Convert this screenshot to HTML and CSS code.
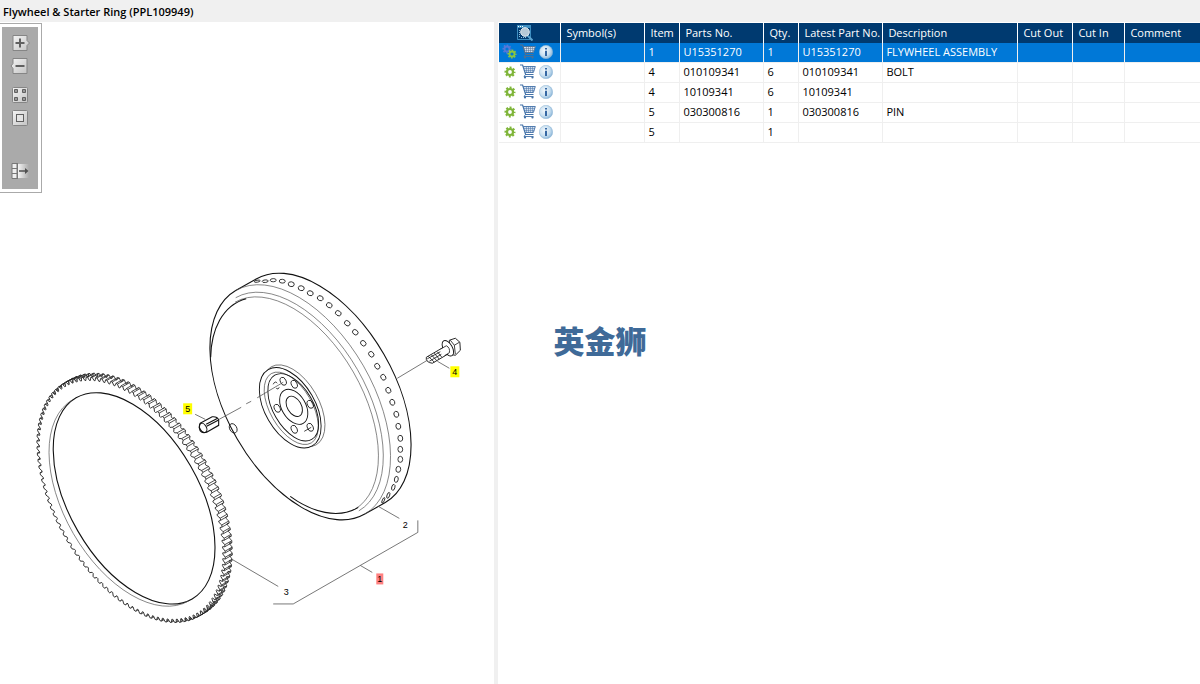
FILE: index.html
```
<!DOCTYPE html>
<html lang="en">
<head>
    <meta charset="UTF-8">
    <meta name="viewport" content="width=device-width, initial-scale=1.0">
    <title>Flywheel &amp; Starter Ring</title>
    <link rel="stylesheet" href="styles.css">
</head>
<body>

    <!-- Shared icons -->
    <svg class="icon-defs" aria-hidden="true">
        <defs>
            <linearGradient id="btn-fill" x1="0" y1="0" x2="1" y2="1">
                <stop offset="0" stop-color="#f4f4f4"/>
                <stop offset="1" stop-color="#c4c4c4"/>
            </linearGradient>
            <linearGradient id="fade-fill" x1="0" y1="0" x2="1" y2="0">
                <stop offset="0" stop-color="#f4f4f4"/>
                <stop offset="1" stop-color="#aaaaaa"/>
            </linearGradient>
            <radialGradient id="info-fill" cx="0.4" cy="0.4" r="0.65">
                <stop offset="0" stop-color="#f2f8fc"/>
                <stop offset="0.6" stop-color="#c8dff0"/>
                <stop offset="1" stop-color="#85b2d6"/>
            </radialGradient>
        </defs>
        <symbol id="gear" viewBox="0 0 12 12">
            <g fill="none" stroke="currentColor">
                <circle cx="6" cy="6" r="3" stroke-width="2.2"/>
                <circle cx="6" cy="6" r="4.6" stroke-width="1.8" stroke-dasharray="2 1.613" stroke-dashoffset="1"/>
            </g>
        </symbol>
        <symbol id="cart" viewBox="0 0 16 15">
            <path d="M3.500 2.500h12l-2 6H5.200z" fill="#d5e0ee"/>
            <path d="M0 1h2.600l3 9.500h7.900" fill="none" stroke="currentColor" stroke-width="1.200"/>
            <path d="M3.300 2.500h12L13.400 8.500H5.200" fill="none" stroke="currentColor" stroke-width="0.900"/>
            <path d="M3.800 4.500h11M4.400 6.500h9.800M6.500 2.500v6M8.500 2.500v6M10.500 2.500v6M12.500 2.500v6" fill="none" stroke="currentColor" stroke-width="0.500"/>
            <path d="M5.500 10.500L4 12.500h9.500" fill="none" stroke="currentColor" stroke-width="0.900"/>
            <circle cx="5" cy="13.500" r="1.100" fill="currentColor"/>
            <circle cx="12.500" cy="13.500" r="1.100" fill="currentColor"/>
        </symbol>
        <symbol id="info" viewBox="0 0 14 14">
            <circle cx="7" cy="7" r="6.700" fill="url(#info-fill)" stroke="#8fb6d6" stroke-width="0.500"/>
            <path d="M6 3h2v1.600H6zM6 5.700h2v5.300H6z" fill="#3567a3"/>
        </symbol>
    </svg>

    <h1 class="title">Flywheel &amp; Starter Ring (PPL109949)</h1>

    <main class="panes">
        <!-- Drawing -->
        <section class="drawing">
            <svg class="diagram" viewBox="0 22 494 662" role="img" aria-label="Flywheel drawing">
                <!-- Ring gear -->
                <g id="ring"></g>
                <g class="ink">
                    <ellipse cx="134" cy="498" rx="116" ry="65" transform="rotate(60 134 498)"/>
                    <path class="thin" d="M72.500 399.500A100 57 60 0 0 188.500 600.500"/>
                </g>

                <!-- Flywheel -->
                <g class="ink">
                    <path d="M235.500 290.300L256 278.800A100 56.500 60 0 1 385 502.200L364.500 513.700A100 56.500 60 0 1 235.500 290.300z" fill="#fff"/>
                    <path class="thin" d="M235.500 290.300A100 56.500 60 0 1 364.500 513.700"/>
                    <path class="thin" d="M235.500 297.500A100 56.500 60 0 1 358.500 510.500"/>
                    <path class="thin" d="M234.800 302A100 56.500 60 0 1 354.300 509"/>
                    <path d="M246 298.500C222 305 211 330 210.500 357M290 496C312 512 338 519 358 507"/>
                </g>
                <g id="rim-holes" class="ink small"></g>

                <!-- Hub -->
                <g class="ink">
                    <ellipse class="thin" cx="293.500" cy="405.500" rx="45" ry="25" transform="rotate(60 293.500 405.500)" fill="#fff"/>
                    <ellipse class="mid" cx="290" cy="407.500" rx="44" ry="25" transform="rotate(60 290 407.500)" fill="#fff"/>
                    <ellipse class="thin" cx="291" cy="408" rx="40" ry="21" transform="rotate(60 291 408)"/>
                    <ellipse class="mid" cx="293" cy="407" rx="37" ry="20" transform="rotate(60 293 407)"/>
                    <ellipse class="mid" cx="293.500" cy="406.500" rx="19" ry="12" transform="rotate(60 293.500 406.500)"/>
                    <ellipse class="mid" cx="294" cy="406" rx="11" ry="7" transform="rotate(60 294 406)"/>
                </g>
                <g id="hub-holes" class="ink small"></g>
                <g class="ink small">
                    <path d="M273 384q2-4 4-1M276 388q2 2 3-1M304 431l7-4"/>
                    <ellipse cx="233" cy="428" rx="5" ry="3.500" transform="rotate(60 233 428)"/>
                </g>

                <!-- Pin -->
                <g class="ink">
                    <path d="M200 423L212 416.500Q217 416 218.500 419.500L218.500 425L206.500 432Q200 434 199 427z" fill="#fff"/>
                    <ellipse cx="203" cy="427.500" rx="5" ry="3.200" transform="rotate(60 203 427.500)"/>
                    <path d="M206 424L217.500 418M206.500 426L218 420"/>
                </g>

                <!-- Bolt -->
                <g class="ink">
                    <path class="mid" d="M426 357L444 346.500L449 353L432 363Q425 362 426 357z" fill="#fff"/>
                    <path class="small" d="M428 356l6 6M431 354.500l5.500 6M434 353l5 6M437 351.500l4.500 5.500M427 358.500l13-7M429 361l12-7"/>
                    <path class="mid" d="M449 340L455 338L459.500 342L460 350L455 355L449 354z" fill="#fff"/>
                    <ellipse class="mid" cx="447.500" cy="348" rx="8.500" ry="4.500" transform="rotate(60 447.500 348)" fill="#fff"/>
                    <path class="small" d="M450 340l4 5 5-3M454 345l1 9"/>
                    <path class="small" d="M440 349l6-3.500q4 2 3 7l-5 3" fill="#fff"/>
                </g>

                <!-- Leader lines -->
                <path class="leader" d="M397 378L427 360M437 361L449 368M195 414L205 419M219 419L241 407M246 403.500L251 401M257 397.500L283 382M378 506L399 518M232 559L278 586M360 565L372 572M417.500 520V532L293 603.500H273"/>

                <!-- Callouts -->
                <g class="callouts">
                    <rect class="mark" x="450" y="366" width="9" height="11"/>
                    <rect class="mark" x="183" y="403" width="9" height="11"/>
                    <rect class="mark-active" x="376" y="573" width="7" height="11"/>
                    <text x="454.500" y="375">4</text>
                    <text x="187.500" y="412">5</text>
                    <text x="379.500" y="582">1</text>
                    <text x="405" y="528">2</text>
                    <text x="286" y="595">3</text>
                </g>
            </svg>

            <div class="toolbar">
                <button type="button" aria-label="Zoom in">
                    <svg viewBox="0 0 18 16">
                        <path d="M1 .5h14v5l2.500 2.500-2.500 2.500v5H1z" fill="url(#btn-fill)" stroke="#858585"/>
                        <path d="M8 3.500v9M3.500 8h9" stroke="#606060" stroke-width="2"/>
                    </svg>
                </button>
                <button type="button" aria-label="Zoom out">
                    <svg viewBox="0 0 18 16">
                        <path d="M1 .5h14v15H1v-5L-1 8l2-2.500z" fill="url(#btn-fill)" stroke="#858585"/>
                        <path d="M3.500 8h9" stroke="#606060" stroke-width="2"/>
                    </svg>
                </button>
                <button type="button" class="spaced" aria-label="Fit page">
                    <svg viewBox="0 0 18 16">
                        <rect x="0.500" y="0.500" width="15" height="15" rx="1" fill="url(#btn-fill)" stroke="#858585"/>
                        <path d="M2.500 2.500h3v3h-3zM10.500 2.500h3v3h-3zM2.500 10.500h3v3h-3zM10.500 10.500h3v3h-3z" fill="#999" stroke="#606060"/>
                    </svg>
                </button>
                <button type="button" aria-label="Actual size">
                    <svg viewBox="0 0 18 16">
                        <rect x="0.500" y="0.500" width="15" height="15" rx="1" fill="url(#btn-fill)" stroke="#858585"/>
                        <rect x="4.500" y="4.500" width="7" height="7" fill="#e4e4e4" stroke="#606060"/>
                    </svg>
                </button>
                <button type="button" class="last" aria-label="Toggle parts list">
                    <svg viewBox="0 0 18 16">
                        <path d="M0 .5h5v15H0z" fill="#eee" stroke="#777"/>
                        <path d="M0 5.500h5M0 10.500h5" stroke="#777"/>
                        <path d="M6 1h11v14H6z" fill="url(#fade-fill)"/>
                        <path d="M5.500 0v16" stroke="#777"/>
                        <path d="M7 7.300h6V5l3.500 3-3.500 3V8.700H7z" fill="#505050"/>
                    </svg>
                </button>
            </div>
        </section>

        <div class="splitter"></div>

        <!-- Parts list -->
        <section class="parts">
            <table>
                <colgroup>
                    <col class="c-icons"><col class="c-number"><col class="c-short"><col class="c-number"><col class="c-short">
                    <col class="c-number"><col class="c-desc"><col class="c-out"><col class="c-in"><col>
                </colgroup>
                <thead>
                    <tr>
                        <th>
                            <svg class="find" viewBox="0 0 16 16" role="img" aria-label="Find">
                                <path d="M0 0h14v3H0z" fill="#3d8dc0"/>
                                <path d="M.5 3v11.500h13V3" fill="none" stroke="#3d8dc0"/>
                                <path d="M2.500 5v8M4 12.500h6" fill="none" stroke="#8fc0de" stroke-dasharray="1 1"/>
                                <path d="M1 1.500h1M3 1.500h1M5 1.500h1" stroke="#fff"/>
                                <path d="M10.500 10.500l5 5" stroke="#5ba3cf" stroke-width="2"/>
                                <circle cx="8" cy="7" r="4.300" fill="#b5c8d6" stroke="#e4ecf2"/>
                            </svg>
                        </th>
                        <th>Symbol(s)</th>
                        <th>Item</th>
                        <th>Parts No.</th>
                        <th>Qty.</th>
                        <th>Latest Part No.</th>
                        <th>Description</th>
                        <th>Cut Out</th>
                        <th>Cut In</th>
                        <th>Comment</th>
                    </tr>
                </thead>
                <tbody id="parts-body"></tbody>
            </table>
        </section>
    </main>

    <div class="watermark" lang="zh">英金狮</div>

    <script src="script.js"></script>
</body>
</html>
```
FILE: styles.css
```
* {
    box-sizing: border-box;
}
body {
    margin: 0;
    min-height: 100vh;
    display: flex;
    flex-direction: column;
    font-family: "Open Sans", "Noto Sans", sans-serif;
    font-size: 11px;
    color: #000;
    background-color: #f0f0f0;
}
button {
    display: block;
    padding: 0;
    border: none;
    background: none;
    cursor: pointer;
}
svg {
    display: block;
}
.icon-defs {
    position: absolute;
    width: 0;
    height: 0;
}
.title {
    margin: 0;
    padding: 2px 3px 0;
    height: 22px;
    font-size: 11px;
    line-height: 20px;
    font-weight: 600;
}
.panes {
    flex: 1;
    display: grid;
    grid-template-columns: 41.2% 4px 1fr;
}

/* Drawing */
.drawing {
    position: relative;
    background-color: #fff;
}
.diagram {
    width: 100%;
    height: auto;
}
.ink {
    fill: none;
    stroke: #111;
    stroke-width: 1.1;
}
.thin {
    stroke: #555;
    stroke-width: 0.7;
}
.mid {
    stroke-width: 0.9;
}
.small {
    stroke-width: 0.8;
}
.tooth-back {
    fill: #fff;
    stroke: #222;
    stroke-width: 0.8;
}
.tooth-front {
    fill: #fff;
    stroke: #222;
    stroke-width: 0.9;
}
.leader {
    fill: none;
    stroke: #555;
    stroke-width: 0.8;
}
.callouts text {
    font-family: "Liberation Sans", Arial, sans-serif;
    font-size: 9px;
    text-anchor: middle;
}
.mark {
    fill: #ff0;
}
.mark-active {
    fill: #ff8080;
}
.toolbar {
    position: absolute;
    top: 1px;
    left: 0;
    width: 42px;
    height: 170px;
    padding: 11px 0 0 12px;
    display: flex;
    flex-direction: column;
    gap: 7px;
    border: 1px solid #aaa;
    border-left: none;
    background-color: #aaa;
    box-shadow: inset 2px 0 #fff, inset -3px 0 #fff, inset 0 3px #fff, inset 0 -3px #fff;
}
.toolbar svg {
    width: 18px;
    height: 16px;
    overflow: visible;
}
.toolbar .spaced {
    margin-top: 6px;
}
.toolbar .last {
    margin-top: 30px;
}

/* Parts list */
.parts {
    padding-left: 1px;
    background-color: #fff;
    overflow: hidden;
}
table {
    width: 100%;
    margin-top: 1px;
    table-layout: fixed;
    border-collapse: separate;
    border-spacing: 0;
}
.c-icons {
    width: 62px;
}
.c-number {
    width: 84px;
}
.c-short {
    width: 35px;
}
.c-desc {
    width: 135px;
}
.c-out {
    width: 55px;
}
.c-in {
    width: 52px;
}
th, td {
    height: 20px;
    padding: 0 0 0 5px;
    line-height: 18px;
    text-align: left;
    white-space: nowrap;
    border-right: 1px solid #efefef;
}
th {
    font-weight: 400;
    color: #fff;
    background-color: #003a70;
    border-right-color: #fff;
}
td {
    padding: 0 0 2px 3px;
    line-height: 17px;
    border-bottom: 1px solid #efefef;
}
th:last-child, td:last-child {
    border-right: none;
}
.selected td {
    color: #fff;
    background-color: #0078d7;
}
.find {
    width: 16px;
    height: 16px;
    margin-left: 13px;
}
.icons {
    display: flex;
    align-items: center;
    gap: 3px;
}
.gear {
    width: 15px;
    height: 12px;
    padding: 0 1px 0 2px;
    color: #7fb539;
}
.gears {
    width: 15px;
    height: 15px;
    overflow: visible;
}
.gear-blue {
    color: #5577d8;
}
.gear-green {
    color: #8cc63f;
}
.cart {
    width: 16px;
    height: 15px;
    color: #4472a8;
}
.selected .cart {
    color: #526f8e;
}
.info {
    width: 14px;
    height: 14px;
}

.watermark {
    position: absolute;
    top: 50%;
    left: 50%;
    transform: translate(-50%, -50%);
    padding-bottom: 4px;
    font-family: "Noto Sans CJK SC", sans-serif;
    font-size: 31px;
    line-height: 32px;
    font-weight: 900;
    white-space: nowrap;
    color: #3f6a98;
}
```
FILE: script.js
```
const SVG_NS = 'http://www.w3.org/2000/svg';

const PARTS = [
    { item: '1', part: 'U15351270', qty: '1', latest: 'U15351270', desc: 'FLYWHEEL ASSEMBLY', assembly: true },
    { item: '4', part: '010109341', qty: '6', latest: '010109341', desc: 'BOLT' },
    { item: '4', part: '10109341', qty: '6', latest: '10109341', desc: '' },
    { item: '5', part: '030300816', qty: '1', latest: '030300816', desc: 'PIN' },
    { item: '5', part: '', qty: '1', latest: '', desc: '' }
];

const RIM_HOLES = [
    [257, 281], [265, 281], [273, 280], [282, 281], [291, 284], [301, 288], [310, 293], [320, 298],
    [329, 305], [338, 313], [347, 323], [355, 332], [363, 343], [371, 354], [377, 366], [383, 377],
    [388, 390], [392, 402], [396, 414], [398, 426], [400, 438], [400, 449], [400, 459], [398, 469],
    [396, 479], [393, 487], [388, 495], [383, 500]
];

const HUB_HOLES = [[283, 381], [294, 384], [277, 408], [310, 404], [294, 429], [310, 427]];

function addShape(parent, name, attrs) {
    const el = document.createElementNS(SVG_NS, name);
    Object.keys(attrs).forEach(key => el.setAttribute(key, attrs[key]));
    parent.appendChild(el);
}

// Point on an ellipse whose long axis is turned by 60 degrees
function ringPoint(cx, cy, r, t) {
    const a = r * Math.cos(t);
    const b = r * 0.565 * Math.sin(t);
    const x = cx + a * 0.5 - b * 0.866;
    const y = cy + a * 0.866 + b * 0.5;
    return x.toFixed(1) + ' ' + y.toFixed(1);
}

// Ring gear: teeth drawn from back to front
function drawRing() {
    const ring = document.getElementById('ring');
    const teeth = 112;
    const step = Math.PI * 2 / teeth;

    function outline(cx, cy) {
        const points = [];
        for (let i = 0; i < teeth; i++) {
            const t = i * step;
            points.push(ringPoint(cx, cy, 131, t));
            points.push(ringPoint(cx, cy, 134.5, t + step * 0.3));
            points.push(ringPoint(cx, cy, 134.5, t + step * 0.6));
            points.push(ringPoint(cx, cy, 131, t + step * 0.8));
        }
        return 'M' + points.join('L') + 'z';
    }

    addShape(ring, 'path', { d: outline(138, 495.5), class: 'tooth-back' });
    let edges = '';
    for (let i = 0; i < teeth; i++) {
        const t = i * step;
        [0.3, 0.6].forEach(part => {
            edges += 'M' + ringPoint(131, 499.5, 134.5, t + step * part) +
                'L' + ringPoint(138, 495.5, 134.5, t + step * part);
        });
    }
    addShape(ring, 'path', { d: edges, class: 'tooth-back' });
    addShape(ring, 'path', { d: outline(131, 499.5), class: 'tooth-front' });
    // the front face hides the roots of the teeth
    addShape(ring, 'ellipse', {
        cx: 131, cy: 499.5, rx: 130, ry: 73, transform: 'rotate(60 131 499.5)', fill: '#fff'
    });
}

function drawHoles() {
    const rim = document.getElementById('rim-holes');
    RIM_HOLES.forEach(([x, y], i) => {
        const edge = Math.min(i, RIM_HOLES.length - 1 - i);
        addShape(rim, 'ellipse', {
            cx: x, cy: y, rx: 3, ry: edge < 4 ? 1 + edge * 0.3 : 2.4,
            transform: `rotate(${-10 + i * 4.6} ${x} ${y})`
        });
    });
    const hub = document.getElementById('hub-holes');
    HUB_HOLES.forEach(([x, y]) => {
        addShape(hub, 'ellipse', { cx: x, cy: y, rx: 4.2, ry: 2.8, transform: `rotate(65 ${x} ${y})` });
    });
}

function gearIcon(part) {
    if (part.assembly) {
        return `<svg class="gears" viewBox="0 0 15 15">
            <use class="gear-blue" href="#gear" x="0" y="0" width="10" height="10"/>
            <use class="gear-green" href="#gear" x="5" y="5" width="10" height="10"/>
        </svg>`;
    }
    return '<svg class="gear"><use href="#gear" width="12" height="12"/></svg>';
}

function fillTable() {
    document.getElementById('parts-body').innerHTML = PARTS.map(part => `
        <tr class="${part.assembly ? 'selected' : ''}">
            <td>
                <div class="icons">
                    ${gearIcon(part)}
                    <button type="button" aria-label="Add to cart"><svg class="cart"><use href="#cart"/></svg></button>
                    <button type="button" aria-label="Information"><svg class="info"><use href="#info"/></svg></button>
                </div>
            </td>
            <td></td>
            <td>${part.item}</td>
            <td>${part.part}</td>
            <td>${part.qty}</td>
            <td>${part.latest}</td>
            <td>${part.desc}</td>
            <td></td>
            <td></td>
            <td></td>
        </tr>`).join('');
}

drawRing();
drawHoles();
fillTable();
```
